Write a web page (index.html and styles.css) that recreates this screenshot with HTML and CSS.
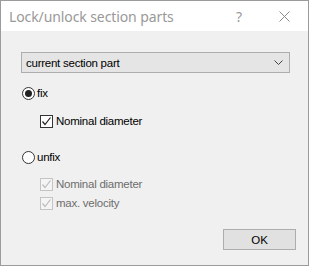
FILE: index.html
```html
<!DOCTYPE html>
<html>
<head>
<meta charset="utf-8">
<link rel="stylesheet" href="styles.css">
</head>
<body>
<div class="dialog">
  <div class="titlebar">
    <span class="title">Lock/unlock section parts</span>
    <span class="help">?</span>
    <span class="close"><svg width="11" height="11" viewBox="0 0 11 11"><path d="M0.5 0.5L10.5 10.5M10.5 0.5L0.5 10.5" stroke="#8a8a8a" stroke-width="1" fill="none"/></svg></span>
  </div>
  <div class="content">
    <div class="combo">
      <span class="combo-text">current section part</span>
      <svg class="chev" width="9" height="5" viewBox="0 0 9 5"><path d="M0.5 0.5L4.5 4.5L8.5 0.5" stroke="#444" stroke-width="1" fill="none"/></svg>
    </div>
    <div class="row radio-row first">
      <span class="radio checked"><span class="dot"></span></span>
      <span class="label">fix</span>
    </div>
    <div class="row check-row">
      <span class="check"><svg width="11" height="11" viewBox="0 0 11 11"><path d="M1.5 5.5L4 8.5L9.5 1.5" stroke="#222" stroke-width="1.2" fill="none"/></svg></span>
      <span class="label">Nominal diameter</span>
    </div>
    <div class="row radio-row second">
      <span class="radio"></span>
      <span class="label">unfix</span>
    </div>
    <div class="row check-row disabled d1">
      <span class="check"><svg width="11" height="11" viewBox="0 0 11 11"><path d="M1.5 5.5L4 8.5L9.5 1.5" stroke="#bcbcbc" stroke-width="1.2" fill="none"/></svg></span>
      <span class="label">Nominal diameter</span>
    </div>
    <div class="row check-row disabled d2">
      <span class="check"><svg width="11" height="11" viewBox="0 0 11 11"><path d="M1.5 5.5L4 8.5L9.5 1.5" stroke="#bcbcbc" stroke-width="1.2" fill="none"/></svg></span>
      <span class="label">max. velocity</span>
    </div>
    <div class="actions">
      <button class="ok">OK</button>
    </div>
  </div>
</div>
</body>
</html>
```
FILE: styles.css
```css
* { box-sizing: border-box; }
html, body { margin: 0; padding: 0; }
body {
  width: 309px;
  height: 266px;
  font-family: "Liberation Sans", Arial, sans-serif;
  font-size: 11.5px;
  letter-spacing: -0.25px;
  color: #000;
}
.dialog {
  width: 309px;
  height: 266px;
  border: 1px solid #9b9b9b;
  display: flex;
  flex-direction: column;
  background: #f0f0f0;
}
.titlebar {
  height: 30px;
  background: #fff;
  display: flex;
  align-items: center;
  padding-left: 8px;
  flex-shrink: 0;
  letter-spacing: 0;
}
.title {
  font-family: "Noto Sans", sans-serif;
  font-size: 14px;
  color: #999;
  flex: 1;
  letter-spacing: -0.1px;
}
.help {
  font-family: "Noto Sans", sans-serif;
  font-size: 14px;
  color: #999;
  width: 46px;
  text-align: center;
}
.close {
  width: 46px;
  display: flex;
  justify-content: center;
  padding-left: 2px;
  padding-right: 4px;
}
.content {
  flex: 1;
  padding: 21px 12px 0 20px;
  display: flex;
  flex-direction: column;
}
.combo {
  height: 21px;
  width: 269px;
  border: 1px solid #adadad;
  background: #e5e5e5;
  display: flex;
  align-items: center;
  padding-left: 4px;
  padding-right: 6px;
}
.combo-text { flex: 1; }
.row {
  display: flex;
  align-items: center;
  height: 16px;
}
.radio-row { padding-left: 1px; }
.first { margin-top: 12px; }
.second { margin-top: 20px; }
.check-row { padding-left: 19px; margin-top: 12px; }
.d1 { margin-top: 11px; }
.d2 { margin-top: 3px; }
.radio {
  width: 13px;
  height: 13px;
  border: 1px solid #333;
  border-radius: 50%;
  background: #fff;
  display: flex;
  align-items: center;
  justify-content: center;
  margin-right: 2px;
}
.dot {
  width: 7px;
  height: 7px;
  border-radius: 50%;
  background: #222;
}
.check {
  width: 13px;
  height: 13px;
  border: 1px solid #333;
  background: #fff;
  display: flex;
  align-items: center;
  justify-content: center;
  margin-right: 3px;
}
.disabled .check { border-color: #c4c4c4; background: #f4f4f4; }
.disabled .label { color: #6d6d6d; }
.actions {
  margin-top: auto;
  margin-bottom: 15px;
  display: flex;
  justify-content: flex-end;
}
.ok {
  width: 73px;
  height: 21px;
  border: 1px solid #adadad;
  background: #e1e1e1;
  font-family: "Liberation Sans", Arial, sans-serif;
  font-size: 11.5px;
  color: #000;
  padding: 0;
}
```
